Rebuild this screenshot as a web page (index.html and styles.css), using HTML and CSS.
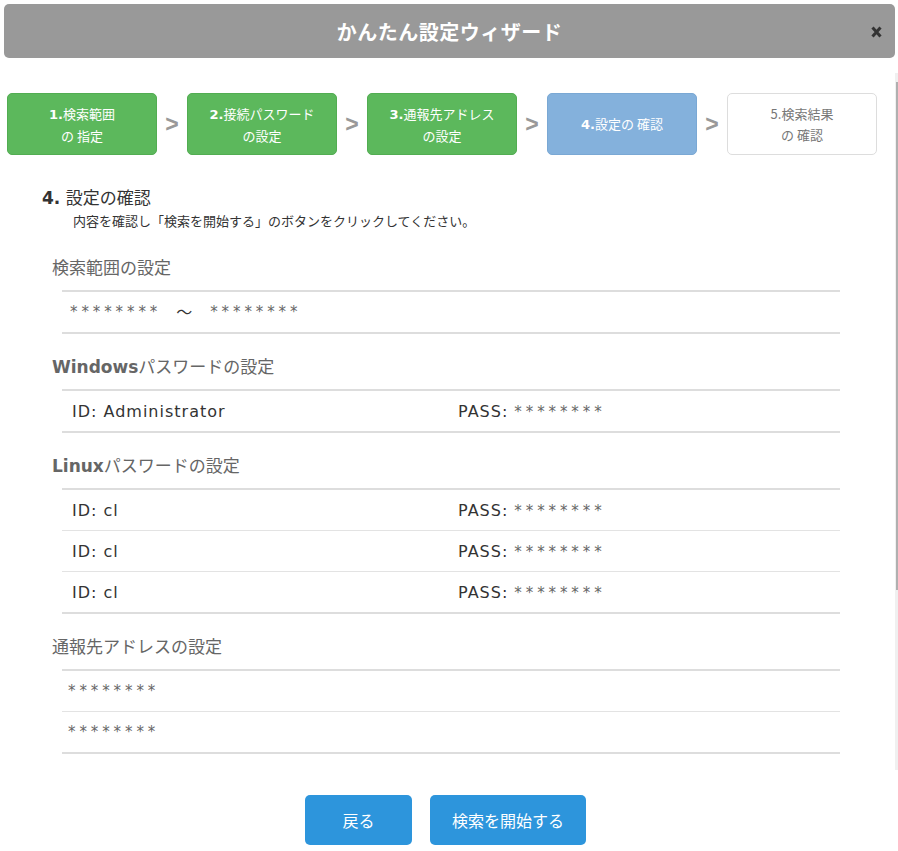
FILE: index.html
```html
<!DOCTYPE html>
<html lang="ja">
<head>
    <meta charset="UTF-8">
    <meta name="viewport" content="width=device-width, initial-scale=1.0">
    <title>かんたん設定ウィザード</title>
    <link rel="stylesheet" href="styles.css">
</head>
<body>
    <div class="wizard">
        <div class="wizard-header">
            <h1>かんたん設定ウィザード</h1>
            <button class="close-btn" aria-label="閉じる">
                <svg width="11" height="12" viewBox="0 0 11 12">
                    <path d="M1.5 1.5 L9.5 10.5 M9.5 1.5 L1.5 10.5" stroke="#333" stroke-width="3" fill="none"/>
                </svg>
            </button>
        </div>

        <div class="scroll-track"><div class="scroll-thumb"></div></div>

        <!-- ステップ表示 -->
        <div class="steps">
            <div class="step done"><span><b>1.</b>検索範囲</span><span>の 指定</span></div>
            <div class="step-arrow">&gt;</div>
            <div class="step done"><span><b>2.</b>接続パスワード</span><span>の設定</span></div>
            <div class="step-arrow">&gt;</div>
            <div class="step done"><span><b>3.</b>通報先アドレス</span><span>の設定</span></div>
            <div class="step-arrow">&gt;</div>
            <div class="step current"><span><b>4.</b>設定の 確認</span></div>
            <div class="step-arrow">&gt;</div>
            <div class="step todo"><span>5.検索結果</span><span>の 確認</span></div>
        </div>

        <div class="confirm">
            <h2 class="confirm-title"><b>4.</b> 設定の確認</h2>
            <p class="confirm-lead">内容を確認し「検索を開始する」のボタンをクリックしてください。</p>

            <div class="group">
                <h3 class="group-title">検索範囲の設定</h3>
                <div class="rows">
                    <div class="row single"><span class="stars">********</span><span class="tilde">〜</span><span class="stars">********</span></div>
                </div>
            </div>

            <div class="group">
                <h3 class="group-title"><b>Windows</b>パスワードの設定</h3>
                <div class="rows">
                    <div class="row"><span>ID: Administrator</span><span>PASS: <i class="stars">********</i></span></div>
                </div>
            </div>

            <div class="group">
                <h3 class="group-title"><b>Linux</b>パスワードの設定</h3>
                <div class="rows">
                    <div class="row"><span>ID: cl</span><span>PASS: <i class="stars">********</i></span></div>
                    <div class="row"><span>ID: cl</span><span>PASS: <i class="stars">********</i></span></div>
                    <div class="row"><span>ID: cl</span><span>PASS: <i class="stars">********</i></span></div>
                </div>
            </div>

            <div class="group">
                <h3 class="group-title">通報先アドレスの設定</h3>
                <div class="rows">
                    <div class="row single address"><span class="stars">********</span></div>
                    <div class="row single address"><span class="stars">********</span></div>
                </div>
            </div>
        </div>

        <div class="actions">
            <button class="btn btn-back">戻る</button>
            <button class="btn btn-start">検索を開始する</button>
        </div>
    </div>
</body>
</html>
```

FILE: styles.css
```css
body {
    margin: 0;
    background: #fff;
    color: #333;
    font-family: "DejaVu Sans", "Noto Sans CJK JP", sans-serif;
}

.wizard {
    position: relative;
    width: 898px;
    height: 851px;
    overflow: hidden;
}

.wizard-header {
    margin: 4px 3px 0 4px;
    height: 54px;
    background: #999;
    border-radius: 5px;
    display: flex;
    align-items: center;
    justify-content: center;
    position: relative;
}

.wizard-header h1 {
    margin: 0;
    color: #fff;
    font-family: "Noto Sans CJK JP", sans-serif;
    font-size: 20px;
    font-weight: bold;
    letter-spacing: 0.5px;
}

.close-btn {
    position: absolute;
    right: 13px;
    top: 22px;
    padding: 0;
    border: none;
    background: none;
    line-height: 0;
}

/* 右側のスクロールバー */
.scroll-track {
    position: absolute;
    left: 895px;
    top: 73px;
    width: 3px;
    height: 697px;
    background: #f0f0f0;
}

.scroll-thumb {
    margin: 9px 0 0 1px;
    width: 2px;
    height: 508px;
    background: #b0b0b0;
}

/* ステップ */
.steps {
    display: flex;
    margin-top: 35px;
    padding-left: 7px;
}

.step {
    width: 150px;
    height: 62px;
    box-sizing: border-box;
    border-radius: 5px;
    display: flex;
    flex-direction: column;
    justify-content: center;
    align-items: center;
    font-family: "Noto Sans CJK JP", sans-serif;
    font-size: 13px;
    line-height: 21px;
}

.step b {
    font-family: "DejaVu Sans", sans-serif;
}

.step.done {
    background: #5cb85c;
    border: 1px solid #52ad52;
    color: #fff;
}

.step.current {
    background: #84b1dc;
    border: 1px solid #7aa8d4;
    color: #fff;
}

.step.todo {
    background: #fff;
    border: 1px solid #ddd;
    color: #777;
}

.step-arrow {
    width: 30px;
    height: 62px;
    display: flex;
    align-items: center;
    justify-content: center;
    color: #999;
    font-family: "Liberation Sans", sans-serif;
    font-weight: bold;
    font-size: 23px;
}

/* 確認内容 */
.confirm {
    padding-left: 42px;
    width: 798px;
}

.confirm-title {
    margin: 31px 0 0;
    font-size: 17px;
    font-weight: normal;
    line-height: 24px;
    color: #333;
}

.confirm-lead {
    margin: 2px 0 0 31px;
    font-size: 13px;
    line-height: 20px;
}

.group {
    margin-top: 21px;
}

.confirm-lead + .group {
    margin-top: 24px;
}

.group-title {
    margin: 0 0 10px 10px;
    font-size: 17px;
    font-weight: normal;
    line-height: 24px;
    color: #666;
}

.rows {
    margin-left: 20px;
    border-top: 2px solid #ddd;
    border-bottom: 2px solid #ddd;
}

.row {
    display: grid;
    grid-template-columns: 386px 1fr;
    height: 40px;
    align-items: center;
    padding-left: 10px;
    font-size: 16px;
    letter-spacing: 1px;
    color: #333;
}

.row + .row {
    border-top: 1px solid #e3e3e3;
}

.row.single {
    display: flex;
    padding-left: 8px;
}

.row.address {
    padding-left: 6px;
}

.stars {
    font-style: normal;
    color: #666;
    font-size: 15px;
    letter-spacing: 3.9px;
}

.tilde {
    margin: 0 17px 0 15px;
    font-family: "Noto Sans CJK JP", sans-serif;
    font-size: 16px;
    line-height: 1;
    position: relative;
    top: -1px;
}

/* ボタン */
.actions {
    display: flex;
    justify-content: center;
    gap: 18px;
    margin-top: 41px;
    padding-right: 7px;
}

.btn {
    height: 50px;
    border: none;
    border-radius: 5px;
    background: #2d95dc;
    color: #fff;
    font-family: "Noto Sans CJK JP", sans-serif;
    font-size: 16px;
    cursor: pointer;
}

.btn-back {
    width: 107px;
}

.btn-start {
    width: 156px;
}
```
